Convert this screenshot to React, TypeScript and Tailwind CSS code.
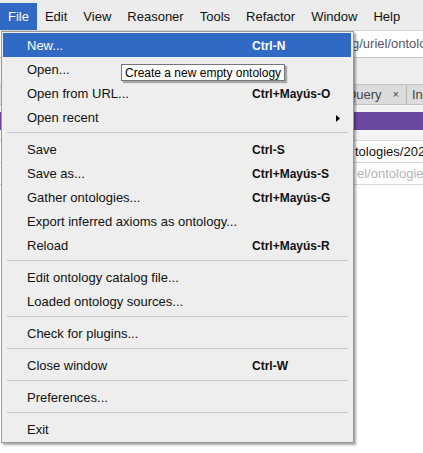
import React from 'react';

type Item =
  | { kind: 'item'; label: string; shortcut?: string; submenu?: boolean; active?: boolean }
  | { kind: 'sep' };

const menuBar = ['File', 'Edit', 'View', 'Reasoner', 'Tools', 'Refactor', 'Window', 'Help'];

const fileMenu: Item[] = [
  { kind: 'item', label: 'New...', shortcut: 'Ctrl-N', active: true },
  { kind: 'item', label: 'Open...' },
  { kind: 'item', label: 'Open from URL...', shortcut: 'Ctrl+Mayús-O' },
  { kind: 'item', label: 'Open recent', submenu: true },
  { kind: 'sep' },
  { kind: 'item', label: 'Save', shortcut: 'Ctrl-S' },
  { kind: 'item', label: 'Save as...', shortcut: 'Ctrl+Mayús-S' },
  { kind: 'item', label: 'Gather ontologies...', shortcut: 'Ctrl+Mayús-G' },
  { kind: 'item', label: 'Export inferred axioms as ontology...' },
  { kind: 'item', label: 'Reload', shortcut: 'Ctrl+Mayús-R' },
  { kind: 'sep' },
  { kind: 'item', label: 'Edit ontology catalog file...' },
  { kind: 'item', label: 'Loaded ontology sources...' },
  { kind: 'sep' },
  { kind: 'item', label: 'Check for plugins...' },
  { kind: 'sep' },
  { kind: 'item', label: 'Close window', shortcut: 'Ctrl-W' },
  { kind: 'sep' },
  { kind: 'item', label: 'Preferences...' },
  { kind: 'sep' },
  { kind: 'item', label: 'Exit' },
];

const App = () => {
  return (
    <div className="relative w-[423px] h-[453px] overflow-hidden bg-white font-['Liberation_Sans',Arial,sans-serif] text-[13px] text-[#111]">
      {/* Menu bar */}
      <div className="flex h-[31px] pt-[3px] bg-[#ececec] border-b border-[#d4d4d4]">
        {menuBar.map((m, i) => (
          <div
            key={m}
            className={
              i === 0
                ? 'h-[27px] px-2 flex items-center bg-[#316ac5] text-white'
                : 'h-[27px] px-2 flex items-center'
            }
          >
            {m}
          </div>
        ))}
      </div>

      {/* Window content behind the menu (only the right edge shows) */}
      <div className="flex flex-col">
        <div className="h-[27px] flex items-end pb-[4px] bg-white border-b border-[#c6c6c6] text-[#55556a] whitespace-nowrap">
          <div className="w-[352px] shrink-0" />
          <span>g/uriel/ontologies/2024/untitled-ontology</span>
        </div>
        <div className="h-[26px] bg-[#eeeeee]" />
        <div className="h-[21px] flex bg-[#dcdcdc] border-y border-[#c4c4c4] text-[#444] whitespace-nowrap">
          <div className="w-[407px] shrink-0 flex items-center justify-end pr-[7px] border-r border-[#b8b8b8]">
            <span>Query</span>
            <span className="ml-[11px] text-[11px]">×</span>
          </div>
          <div className="flex items-center pl-[5px]">Individuals</div>
        </div>
        <div className="h-[7px] bg-[#f3f3f3]" />
        <div className="h-[18px] bg-[#6a48a0]" />
        <div className="h-[10px] bg-[#f3f3f3]" />
        <div className="h-[23px] flex items-center bg-white border-y border-[#d6d6d6] whitespace-nowrap">
          <div className="w-[355px] shrink-0" />
          <span>tologies/2024/untitled</span>
        </div>
        <div className="h-[22px] flex items-center bg-white border-b border-[#d6d6d6] text-[#b4b4b4] whitespace-nowrap">
          <div className="w-[357px] shrink-0" />
          <span>el/ontologies/2024/untitled</span>
        </div>
      </div>

      {/* File menu popup */}
      <div className="absolute left-[1px] top-[31px] w-[353px] border border-[#9a9a9a] bg-[#eeeeee] p-px shadow-[2px_2px_2px_rgba(0,0,0,0.35)]">
        {fileMenu.map((it, i) =>
          it.kind === 'sep' ? (
            <div key={i} className="h-2 pt-[3px]">
              <div className="h-px mx-[4px] bg-[#c6c6c6]" />
            </div>
          ) : (
            <div
              key={i}
              className={
                it.active
                  ? 'h-6 pt-[2px] flex items-center pl-[24px] mr-px bg-[#316ac5] text-white'
                  : 'h-6 pt-[2px] flex items-center pl-[24px]'
              }
            >
              <span className="w-[225px] shrink-0 whitespace-nowrap">{it.label}</span>
              {it.shortcut && <span className="text-[12px] font-bold whitespace-nowrap">{it.shortcut}</span>}
              {it.submenu && (
                <svg className="ml-auto mr-[12px]" width="4" height="7" viewBox="0 0 4 7">
                  <path d="M0 0 L4 3.5 L0 7 Z" fill="#000" />
                </svg>
              )}
            </div>
          )
        )}
      </div>

      {/* Tooltip */}
      <div className="absolute left-[121px] top-[64px] h-[17px] px-[3px] flex items-center border border-[#767676] bg-white text-[12px] text-black whitespace-nowrap shadow-[2px_2px_1px_rgba(0,0,0,0.3)]">
        Create a new empty ontology
      </div>
    </div>
  );
};

export default App;
